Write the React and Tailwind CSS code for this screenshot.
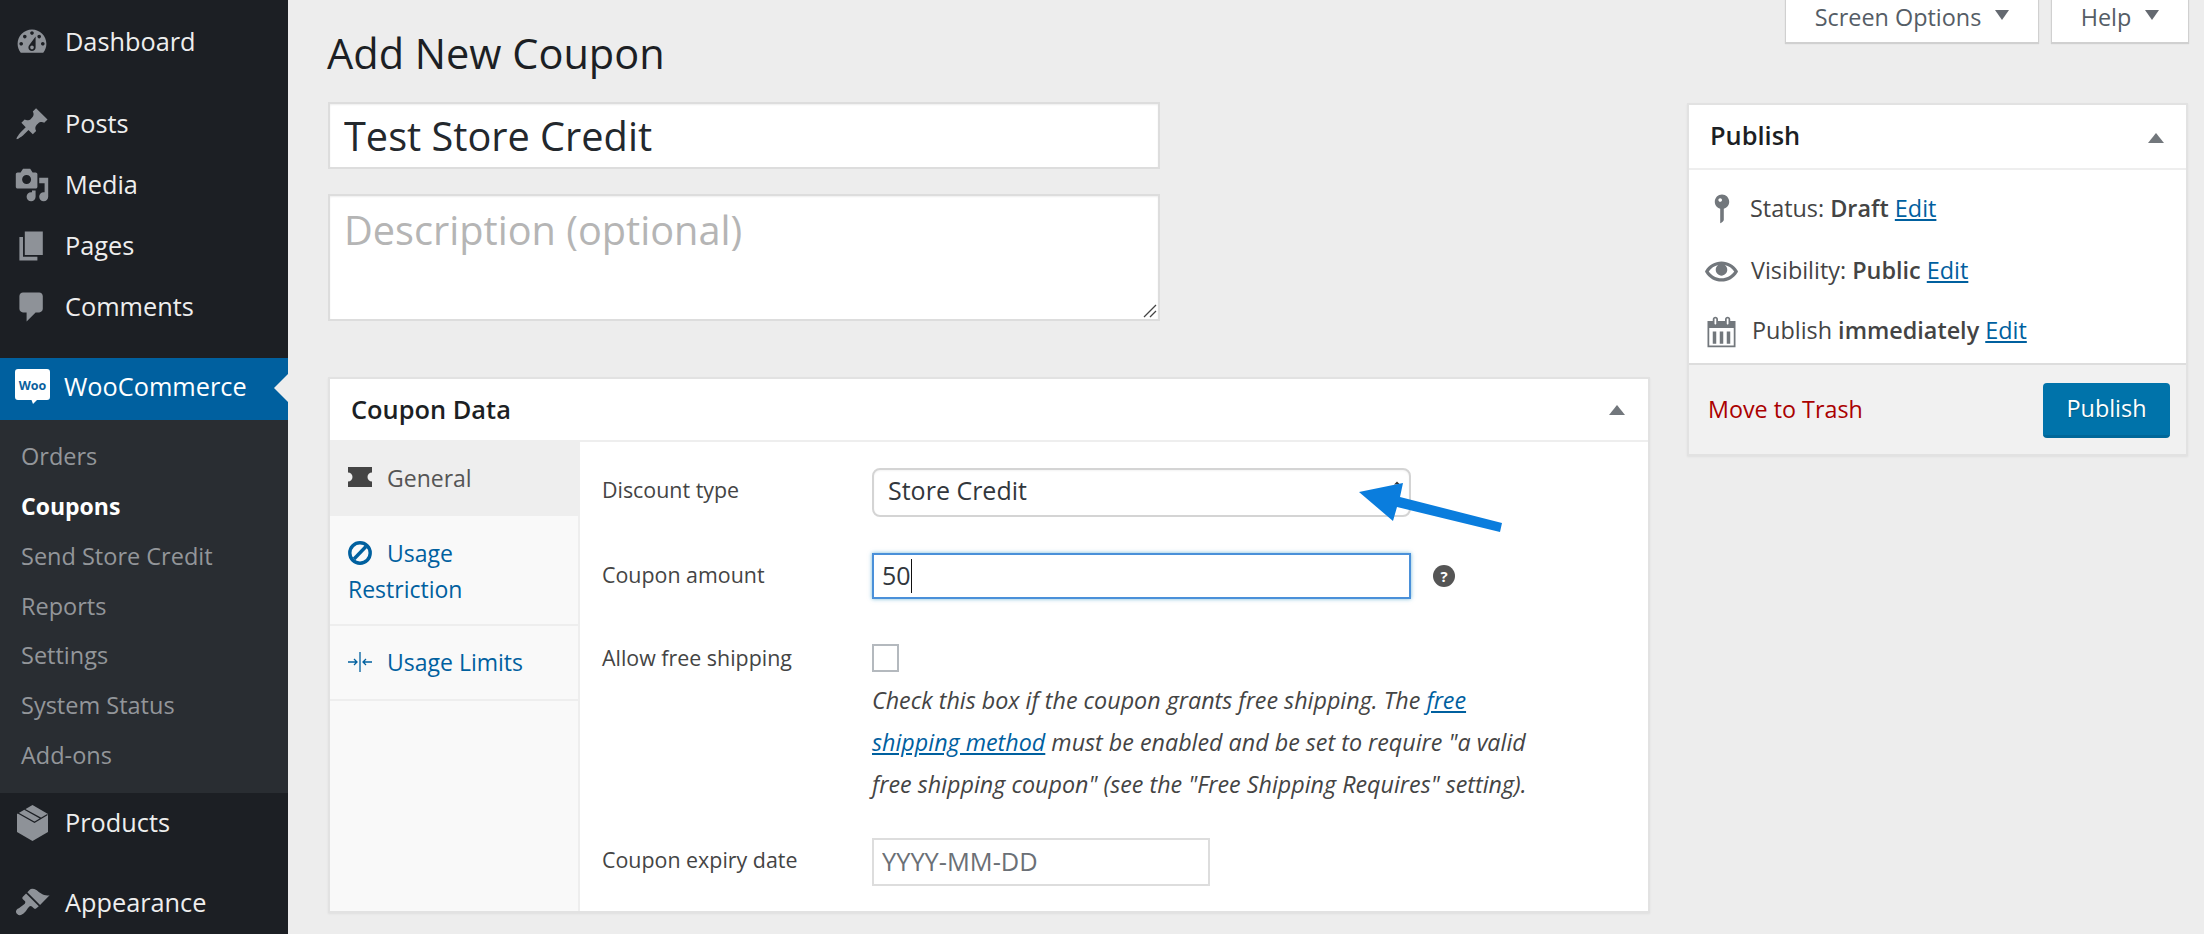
import React from "react";

const Dash = ({ d, className = "", rule }) => (
  <svg viewBox="0 0 20 20" className={className} fill="currentColor" aria-hidden="true">
    <path d={d} fillRule={rule || "evenodd"} />
  </svg>
);

const ICONS = {
  dashboard:
    "M3.76 16h12.48c1.1-1.37 1.76-3.11 1.76-5 0-4.42-3.58-8-8-8s-8 3.58-8 8c0 1.89.66 3.63 1.76 5zM10 4c.55 0 1 .45 1 1s-.45 1-1 1-1-.45-1-1 .45-1 1-1zM6 6c.55 0 1 .45 1 1s-.45 1-1 1-1-.45-1-1 .45-1 1-1zm8 0c.55 0 1 .45 1 1s-.45 1-1 1-1-.45-1-1 .45-1 1-1zm-5.37 5.55L12 7v6c0 1.1-.9 2-2 2s-2-.9-2-2c0-.57.24-1.08.63-1.45zM4 10c.55 0 1 .45 1 1s-.45 1-1 1-1-.45-1-1 .45-1 1-1zm12 0c.55 0 1 .45 1 1s-.45 1-1 1-1-.45-1-1 .45-1 1-1zm-5 3c0-.55-.45-1-1-1s-1 .45-1 1 .45 1 1 1 1-.45 1-1z",
  post:
    "M10.44 3.02l1.82-1.82 6.36 6.35-1.83 1.82c-1.05-.68-2.48-.57-3.41.36l-.75.75c-.92.93-1.04 2.35-.35 3.41l-1.83 1.82-2.41-2.41-2.8 2.79c-.42.42-3.38 2.71-3.8 2.29s1.86-3.39 2.28-3.81l2.79-2.79L4.1 9.36l1.83-1.82c1.05.69 2.48.57 3.4-.36l.75-.75c.93-.92 1.05-2.35.36-3.41z",
  media:
    "M13 11V4c0-.55-.45-1-1-1h-1.67L9 1H5L3.67 3H2c-.55 0-1 .45-1 1v7c0 .55.45 1 1 1h10c.55 0 1-.45 1-1zM7 4.5c1.38 0 2.5 1.12 2.5 2.5S8.38 9.5 7 9.5 4.5 8.38 4.5 7 5.62 4.5 7 4.5zM14 6h5v10.5c0 1.38-1.12 2.5-2.5 2.5S14 17.88 14 16.5s1.12-2.5 2.5-2.5c.17 0 .34.02.5.05V9h-3V6zm-4 8.05V13h2v3.5c0 1.38-1.12 2.5-2.5 2.5S7 17.88 7 16.5 8.12 14 9.5 14c.17 0 .34.02.5.05z",
  page: "M6 15V2h10v13H6zm-1 1h8v2H3V5h2v11z",
  comment:
    "M5 2h9c1.1 0 2 .9 2 2v7c0 1.1-.9 2-2 2h-2l-5 5v-5H5c-1.1 0-2-.9-2-2V4c0-1.1.9-2 2-2z",
  brush:
    "M14.48 11.06L7.41 3.99l1.5-1.5c.5-.56 2.3-.47 3.51.32 1.21.8 1.43 1.28 2.91 2.1 1.18.64 2.45 1.26 4.45.85zm-.71.71L6.7 4.7 4.93 6.47c-.39.39-.39 1.02 0 1.41l1.06 1.06c.39.39.39 1.03 0 1.42-.6.6-1.43 1.11-2.21 1.69-.35.26-.7.53-1.01.84C1.43 13.23.4 14.75 1.77 16.12c1.37 1.37 2.89.34 4.22-1 .31-.31.58-.66.84-1.01.58-.78 1.09-1.61 1.69-2.21.39-.39 1.03-.39 1.42 0l1.06 1.06c.39.39 1.02.39 1.41 0z",
  pin:
    "M14 6c0 1.86-1.28 3.41-3 3.86V16c0 1-2 2-2 2V9.86c-1.72-.45-3-2-3-3.86 0-2.21 1.79-4 4-4s4 1.79 4 4zM8 5c0 .55.45 1 1 1s1-.45 1-1-.45-1-1-1-1 .45-1 1z",
  eye:
    "M19.7 9.4C17.7 6 14 3.9 10 3.9S2.3 6 .3 9.4L0 10l.3.6c2 3.4 5.7 5.5 9.7 5.5s7.7-2.1 9.7-5.5l.3-.6-.3-.6zM10 14.1c-3.1 0-6-1.6-7.7-4.1C3.6 8 5.7 6.6 8 6.1c-.9.6-1.5 1.7-1.5 2.9 0 1.9 1.6 3.5 3.5 3.5s3.5-1.6 3.5-3.5c0-1.2-.6-2.3-1.5-2.9 2.3.5 4.4 1.9 5.7 3.9-1.7 2.5-4.6 4.1-7.7 4.1z",
  calendar:
    "M15 4h3v15H2V4h3V3c0-.41.15-.76.44-1.06.29-.29.65-.44 1.06-.44s.77.15 1.06.44c.29.3.44.65.44 1.06v1h4V3c0-.41.15-.76.44-1.06.29-.29.65-.44 1.06-.44s.77.15 1.06.44c.29.3.44.65.44 1.06v1zM6 3v2.5c0 .14.05.26.15.36.09.09.21.14.35.14s.26-.05.35-.14c.1-.1.15-.22.15-.36V3c0-.14-.05-.26-.15-.36-.09-.09-.21-.14-.35-.14s-.26.05-.35.14c-.1.1-.15.22-.15.36zm7 0v2.5c0 .14.05.26.14.36.1.09.22.14.36.14s.26-.05.36-.14c.09-.1.14-.22.14-.36V3c0-.14-.05-.26-.14-.36-.1-.09-.22-.14-.36-.14s-.26.05-.36.14c-.09.1-.14.22-.14.36zM17 18V8H3v10h14zM5 10h2v7H5v-7zm4 0h2v7H9v-7zm4 0h2v7h-2v-7z",
};

const MenuItem = ({ icon, label, className = "" }) => (
  <div className={`flex items-center text-[25.3px] text-[#eeeeee] ${className}`}>
    <Dash d={ICONS[icon]} className="ml-[14px] mr-[15px] h-[36px] w-[36px] shrink-0 text-[#8e9298]" />
    <span>{label}</span>
  </div>
);

const ProductItem = () => (
  <div className="flex h-[60px] items-center text-[25.3px] text-[#eeeeee]">
    <svg viewBox="0 0 31 36" className="ml-[17px] mr-[17px] h-[36px] w-[31px] shrink-0" aria-hidden="true">
      <path d="M15.5 0L31 9v18l-15.5 9L0 27V9z" fill="#8e9298" />
      <path d="M1 8l16.5 9.2L30.5 9.5M7.5 4.2l16.5 9.2" fill="none" stroke="#1c1f24" strokeWidth="1.3" />
    </svg>
    <span>Products</span>
  </div>
);

const SubItem = ({ label, active }) => (
  <div className={`flex h-[49.8px] items-center pl-[21px] ${active ? "text-[23px] font-bold text-white" : "text-[23.5px] text-[#93969a]"}`}>
    {label}
  </div>
);

const WooLogo = () => (
  <svg viewBox="0 0 35 35" className="ml-[15px] mr-[14px] h-[35px] w-[35px] shrink-0" aria-hidden="true">
    <path d="M3 0h29a3 3 0 0 1 3 3v25a3 3 0 0 1-3 3H22l-4 4-1.5-4H3a3 3 0 0 1-3-3V3a3 3 0 0 1 3-3z" fill="#fff" />
    <text x="17.5" y="20.5" textAnchor="middle" fontSize="12.5" fontWeight="700" fill="#0a5f9e" fontFamily="'Open Sans', sans-serif">Woo</text>
  </svg>
);

const Sidebar = () => (
  <aside className="flex h-full w-[288px] shrink-0 flex-col bg-[#1c1f24]">
    <MenuItem icon="dashboard" label="Dashboard" className="h-[84px]" />
    <div className="mt-[9px] flex flex-col">
      <MenuItem icon="post" label="Posts" className="h-[61px]" />
      <MenuItem icon="media" label="Media" className="h-[61px]" />
      <MenuItem icon="page" label="Pages" className="h-[61px]" />
      <MenuItem icon="comment" label="Comments" className="h-[61px]" />
    </div>
    <div className="relative mt-[21px] flex h-[62px] items-center bg-[#00609f] pb-[5px] text-[25.3px] text-white">
      <WooLogo />
      <span>WooCommerce</span>
      <span className="absolute right-0 top-[16px] h-0 w-0 border-y-[14px] border-r-[14px] border-y-transparent border-r-[#ededed]" />
    </div>
    <div className="flex h-[373px] flex-col bg-[#292d32] pt-[12px]">
      <SubItem label="Orders" />
      <SubItem label="Coupons" active />
      <SubItem label="Send Store Credit" />
      <SubItem label="Reports" />
      <SubItem label="Settings" />
      <SubItem label="System Status" />
      <SubItem label="Add-ons" />
    </div>
    <ProductItem />
    <MenuItem icon="brush" label="Appearance" className="mt-[20px] h-[60px]" />
  </aside>
);

const Tab = ({ children, active, className = "" }) => (
  <div
    className={`text-[23px] leading-[36px] ${active ? "bg-[#eeeeee] text-[#555555]" : "border-b-2 border-[#eeeeee] text-[#00609f]"} pl-[18px] ${className}`}
  >
    {children}
  </div>
);

const Field = ({ label, children, className = "", labelClass = "leading-[44px]" }) => (
  <div className={`flex ${className}`}>
    <div className={`w-[270px] shrink-0 text-[21.4px] text-[#444444] ${labelClass}`}>{label}</div>
    <div className="min-w-0 flex-1">{children}</div>
  </div>
);

const CouponBox = () => (
  <section className="flex h-[536px] flex-col border-2 border-[#e2e2e2] bg-white shadow-[0_1px_2px_rgba(0,0,0,0.06)]">
    <header className="flex h-[61px] shrink-0 items-center justify-between pl-[21px] pr-[23px]">
      <h2 className="text-[25.4px] font-semibold text-[#1c1f24]">Coupon Data</h2>
      <span className="h-0 w-0 border-x-[8px] border-b-[10px] border-x-transparent border-b-[#72777c]" />
    </header>
    <div className="flex min-h-0 flex-1">
      <nav className="flex w-[250px] shrink-0 flex-col border-r-2 border-[#eeeeee] bg-[#f9f9f9]">
        <Tab active className="flex h-[76px] items-center">
          <svg viewBox="0 0 24 20" className="mb-[3px] mr-[15px] h-[20px] w-[24px] text-[#444444]" fill="currentColor" aria-hidden="true">
            <path d="M0 0h24v5.5a4.5 4.5 0 0 0 0 9V20H0v-5.5a4.5 4.5 0 0 0 0-9V0z" />
          </svg>
          General
        </Tab>
        <Tab className="h-[110px] pt-[19px]">
          <svg viewBox="0 0 24 24" className="mr-[15px] inline-block h-[24px] w-[24px] align-[-3px]" fill="none" stroke="currentColor" strokeWidth="3.4" aria-hidden="true">
            <circle cx="12" cy="12" r="10.2" />
            <path d="M18 5.5L6 18" />
          </svg>
          Usage
          <br />
          Restriction
        </Tab>
        <Tab className="flex h-[75px] items-center pb-[1px]">
          <svg viewBox="0 0 24 20" className="mr-[15px] h-[20px] w-[24px]" fill="none" stroke="currentColor" strokeWidth="1.3" aria-hidden="true">
            <path d="M12 0v20M0 10h9M6 7l3 3-3 3M24 10h-9M18 7l-3 3 3 3" />
          </svg>
          Usage Limits
        </Tab>
      </nav>
      <div className="flex-1 border-t-2 border-[#eeeeee] pl-[22px] pt-[26px]">
        <Field label="Discount type">
          <div className="relative w-[539px]">
            <select className="h-[49px] w-full appearance-none rounded-[8px] border-2 border-[#d4d4d4] bg-white pb-[3px] pl-[14px] text-[25px] text-[#32373c] shadow-[inset_0_1px_2px_rgba(0,0,0,0.05)]">
              <option>Store Credit</option>
            </select>
            <svg viewBox="0 0 160 60" className="pointer-events-none absolute left-[485px] top-[13px] h-[60px] w-[160px]" aria-hidden="true">
              <path d="M40 0.5l3 3h-6zM41 20l3-3h-6z" fill="#333333" />
              <path d="M2 11L46 2 43 16 145 42 143 51 40 26 36 40z" fill="#0a7ddd" />
            </svg>
          </div>
        </Field>
        <Field label="Coupon amount" className="mt-[36px]">
          <div className="flex items-center">
            <div className="flex h-[46px] w-[539px] items-center border-2 border-[#4a90d9] pl-[8px] text-[25px] text-[#32373c] shadow-[0_0_4px_rgba(30,140,190,0.6)]">
              50
              <span className="h-[34px] w-[1px] bg-[#111111]" />
            </div>
            <span className="ml-[22px] flex h-[22px] w-[22px] items-center justify-center rounded-full bg-[#555555] text-[15px] font-bold leading-none text-white">?</span>
          </div>
        </Field>
        <Field label="Allow free shipping" className="mt-[45px]" labelClass="leading-[28px]">
          <span className="block h-[28px] w-[27px] border-2 border-[#b4b9be] bg-white" />
          <p className="mt-[7px] w-[665px] text-[23.3px] italic leading-[42px] text-[#444444]">
            Check this box if the coupon grants free shipping. The{" "}
            <a className="text-[#00609f] underline">free</a>{" "}
            <a className="text-[#00609f] underline">shipping method</a> must be enabled and be set to require "a valid{" "}
            <span>free shipping coupon" (see the "Free Shipping Requires" setting).</span>
          </p>
        </Field>
        <Field label="Coupon expiry date" className="mt-[33px]">
          <input
            readOnly
            placeholder="YYYY-MM-DD"
            className="h-[48px] w-[338px] border-2 border-[#dddddd] pb-[3px] pl-[8px] text-[25.4px] placeholder:text-[#6b7076]"
          />
        </Field>
      </div>
    </div>
  </section>
);

const Row = ({ icon, children, className = "", iconClass = "" }) => (
  <div className={`flex h-[60px] items-center text-[23.4px] text-[#444444] ${className}`}>
    <Dash d={ICONS[icon]} className={`shrink-0 text-[#72777c] ${iconClass}`} />
    <span>{children}</span>
  </div>
);

const Edit = () => <a className="text-[#00609f] underline">Edit</a>;

const PublishBox = () => (
  <section className="flex h-[353px] flex-col border-2 border-[#e2e2e2] bg-white shadow-[0_1px_2px_rgba(0,0,0,0.06)]">
    <header className="flex h-[65px] shrink-0 items-center justify-between border-b-2 border-[#eeeeee] pb-[3px] pl-[21px] pr-[22px]">
      <h2 className="text-[25.4px] font-semibold text-[#1c1f24]">Publish</h2>
      <span className="mt-[6px] h-0 w-0 border-x-[8px] border-b-[10px] border-x-transparent border-b-[#72777c]" />
    </header>
    <div className="flex flex-1 flex-col pt-[9px]">
      <Row icon="pin" iconClass="ml-[15px] mr-[10px] h-[36px] w-[36px]">
        Status: <b className="font-semibold">Draft</b> <Edit />
      </Row>
      <Row icon="eye" iconClass="ml-[16px] mr-[13px] h-[33px] w-[33px]" className="mt-[2px]">
        Visibility: <b className="font-semibold">Public</b> <Edit />
      </Row>
      <Row icon="calendar" iconClass="ml-[15px] mr-[13px] h-[35px] w-[35px]">
        Publish <b className="font-semibold">immediately</b> <Edit />
      </Row>
    </div>
    <footer className="flex h-[91px] shrink-0 items-center justify-between border-t-2 border-[#dddddd] bg-[#f1f1f1] pl-[19px] pr-[16px]">
      <a className="text-[23.3px] text-[#aa0000]">Move to Trash</a>
      <button className="mt-[2px] h-[55px] w-[127px] rounded-[4px] border-b-[3px] border-[#006799] bg-[#0073aa] text-[23.4px] text-white [text-shadow:0_1px_1px_#005d82]">
        Publish
      </button>
    </footer>
  </section>
);

const TopTab = ({ label, className = "" }) => (
  <div className={`flex h-[42px] items-center justify-center gap-[14px] bg-white pb-[7px] text-[23.4px] text-[#555d66] shadow-[0_1px_1px_1px_rgba(0,0,0,0.12)] ${className}`}>
    {label}
    <span className="mb-[6px] h-0 w-0 border-x-[7px] border-t-[10px] border-x-transparent border-t-[#646970]" />
  </div>
);

export default function App() {
  return (
    <div className="flex h-[934px] w-[2204px] overflow-hidden bg-[#ededed] font-['Open_Sans',sans-serif]">
      <Sidebar />
      <main className="flex flex-1 pl-[40px] pr-[16px]">
        <div className="w-[1322px] shrink-0">
          <h1 className="ml-[-1px] h-[102px] pt-[28px] text-[41.5px] leading-[50px] text-[#1c1f24]">Add New Coupon</h1>
          <input
            readOnly
            value="Test Store Credit"
            className="block h-[67px] w-[832px] border-2 border-[#dddddd] bg-white pl-[14px] text-[39.7px] text-[#23282d] shadow-[inset_0_1px_2px_rgba(0,0,0,0.07)] outline-none"
          />
          <div className="relative mt-[25px] h-[127px] w-[832px]">
            <textarea
              readOnly
              placeholder="Description (optional)"
              className="block h-full w-full resize-none border-2 border-[#dddddd] bg-white px-[14px] pt-[5px] text-[39.7px] text-[#23282d] shadow-[inset_0_1px_2px_rgba(0,0,0,0.07)] outline-none placeholder:text-[#b5b5b5]"
            />
            <svg viewBox="0 0 14 14" className="absolute bottom-[3px] right-[3px] h-[14px] w-[14px]" fill="none" stroke="#444444" strokeWidth="1.3" aria-hidden="true">
              <path d="M1 13L13 1M7 13l6-6" />
            </svg>
          </div>
          <div className="mt-[56px]">
            <CouponBox />
          </div>
        </div>
        <div className="ml-[37px] w-[501px] shrink-0">
          <div className="flex justify-end gap-[14px]">
            <TopTab label="Screen Options" className="w-[252px]" />
            <TopTab label="Help" className="w-[136px]" />
          </div>
          <div className="mt-[61px]">
            <PublishBox />
          </div>
        </div>
      </main>
    </div>
  );
}
